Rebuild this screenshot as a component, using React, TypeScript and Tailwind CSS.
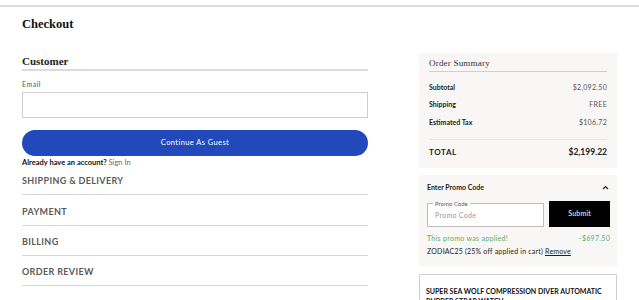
import React from "react";

const serif = { fontFamily: '"Liberation Serif", "Times New Roman", serif' };

function SectionRow({ title, h }: { title: string; h: string }) {
  return (
    <div className={`${h} border-b border-[#d6d6d6] flex items-end pb-[8px]`}>
      <span className="text-[9px] leading-[11px] font-bold tracking-[0.35px] text-[#5a5a5a] uppercase">{title}</span>
    </div>
  );
}

function SummaryRow({ label, value }: { label: string; value: string }) {
  return (
    <div className="h-[17.5px] flex items-center justify-between">
      <span className="text-[7px] font-bold text-[#222]">{label}</span>
      <span className="text-[7px] text-[#555] tracking-[0.3px]">{value}</span>
    </div>
  );
}

export default function App() {
  return (
    <div
      className="w-[639px] h-[300px] overflow-hidden bg-white text-[#222]"
      style={{ fontFamily: 'Lato, "Liberation Sans", Arial, sans-serif' }}
    >
      <div className="h-[5px]" />
      <div className="h-[2px] bg-[#dcdcdc]" />
      <div className="px-[22px]">
        <h1 className="mt-[9px] text-[12.5px] leading-[16px] font-bold text-[#111]" style={serif}>
          Checkout
        </h1>
        <div className="flex mt-[21px]">
          {/* Left column */}
          <div className="w-[346px]">
            <div className="pt-[1px]">
              <h2 className="text-[11px] leading-[14px] font-bold text-[#222] pb-[1px]" style={serif}>
                Customer
              </h2>
              <div className="h-[2px] bg-[#dcdcdc]" />
            </div>
            <div className="mt-[9px] text-[7px] leading-[8px] text-[#555] tracking-[0.5px]">Email</div>
            <div className="mt-[4px] h-[26px] border border-[#cfcfcf] bg-white" />
            <button className="mt-[12px] w-full h-[26px] rounded-full bg-[#2249bb] text-white text-[7.5px] tracking-[0.4px] flex items-center justify-center">
              Continue As Guest
            </button>
            <div className="mt-[2px] text-[7.5px] leading-[10px]">
              <span className="font-bold text-[#111]">Already have an account? </span>
              <span className="text-[#666]">Sign In</span>
            </div>
            <div>
              <SectionRow title="Shipping & Delivery" h="h-[27px]" />
              <SectionRow title="Payment" h="h-[31px]" />
              <SectionRow title="Billing" h="h-[30px]" />
              <SectionRow title="Order Review" h="h-[30px]" />
            </div>
          </div>

          {/* Right column */}
          <div className="ml-[51px] w-[198px]">
            <div className="bg-[#f8f7f5] px-[10px] pb-[7px]">
              <div className="h-[19px] flex items-end pb-[1px] border-b border-[#cfcfcf]">
                <span className="text-[9px] text-[#333] tracking-[0.2px]" style={serif}>
                  Order Summary
                </span>
              </div>
              <div className="pt-[6px] pb-[8px]">
                <SummaryRow label="Subtotal" value="$2,092.50" />
                <SummaryRow label="Shipping" value="FREE" />
                <SummaryRow label="Estimated Tax" value="$106.72" />
              </div>
              <div className="border-t border-[#e6e4e2] h-[22px] flex items-center justify-between pt-[4px]">
                <span className="text-[8px] font-bold tracking-[0.6px] text-[#222]">TOTAL</span>
                <span className="text-[8.5px] font-bold text-[#222]">$2,199.22</span>
              </div>
            </div>

            <div className="mt-[7px] bg-[#f8f7f5] pl-[8px] pr-[7px] h-[91px]">
              <div className="h-[24px] flex items-center justify-between pt-[1px]">
                <span className="text-[7px] font-bold text-[#222]">Enter Promo Code</span>
                <svg width="7" height="5" viewBox="0 0 7 5" className="mr-[1px]">
                  <path d="M1 4 L3.5 1.5 L6 4" stroke="#222" strokeWidth="1.2" fill="none" />
                </svg>
              </div>
              <div className="flex gap-[5px] mt-[2px]">
                <fieldset className="w-[118px] h-[26px] border border-[#bdbdbd] bg-white px-[5px]">
                  <legend className="text-[6px] leading-[6px] text-[#555] px-[2px]">Promo Code</legend>
                  <div className="text-[7px] text-[#999] mt-[3px] ml-[2px] tracking-[0.3px]">Promo Code</div>
                </fieldset>
                <button className="w-[61px] h-[26px] bg-black text-white text-[7px] tracking-[0.2px]">Submit</button>
              </div>
              <div className="mt-[7px] flex justify-between text-[7px] leading-[9px] text-[#5cad5c] tracking-[0.3px]">
                <span>This promo was applied!</span>
                <span>-$697.50</span>
              </div>
              <div className="mt-[4px] text-[7px] leading-[9px] text-[#222] tracking-[0.2px]">
                ZODIAC25 (25% off applied in cart) <span className="underline">Remove</span>
              </div>
            </div>

            <div className="mt-[8px] border border-[#cfcfcf] px-[6px] pt-[11px] h-[60px]">
              <div className="text-[7px] leading-[10px] font-bold text-[#111]">
                SUPER SEA WOLF COMPRESSION DIVER AUTOMATIC
                <br />
                RUBBER STRAP WATCH
              </div>
            </div>
          </div>
        </div>
      </div>
    </div>
  );
}
